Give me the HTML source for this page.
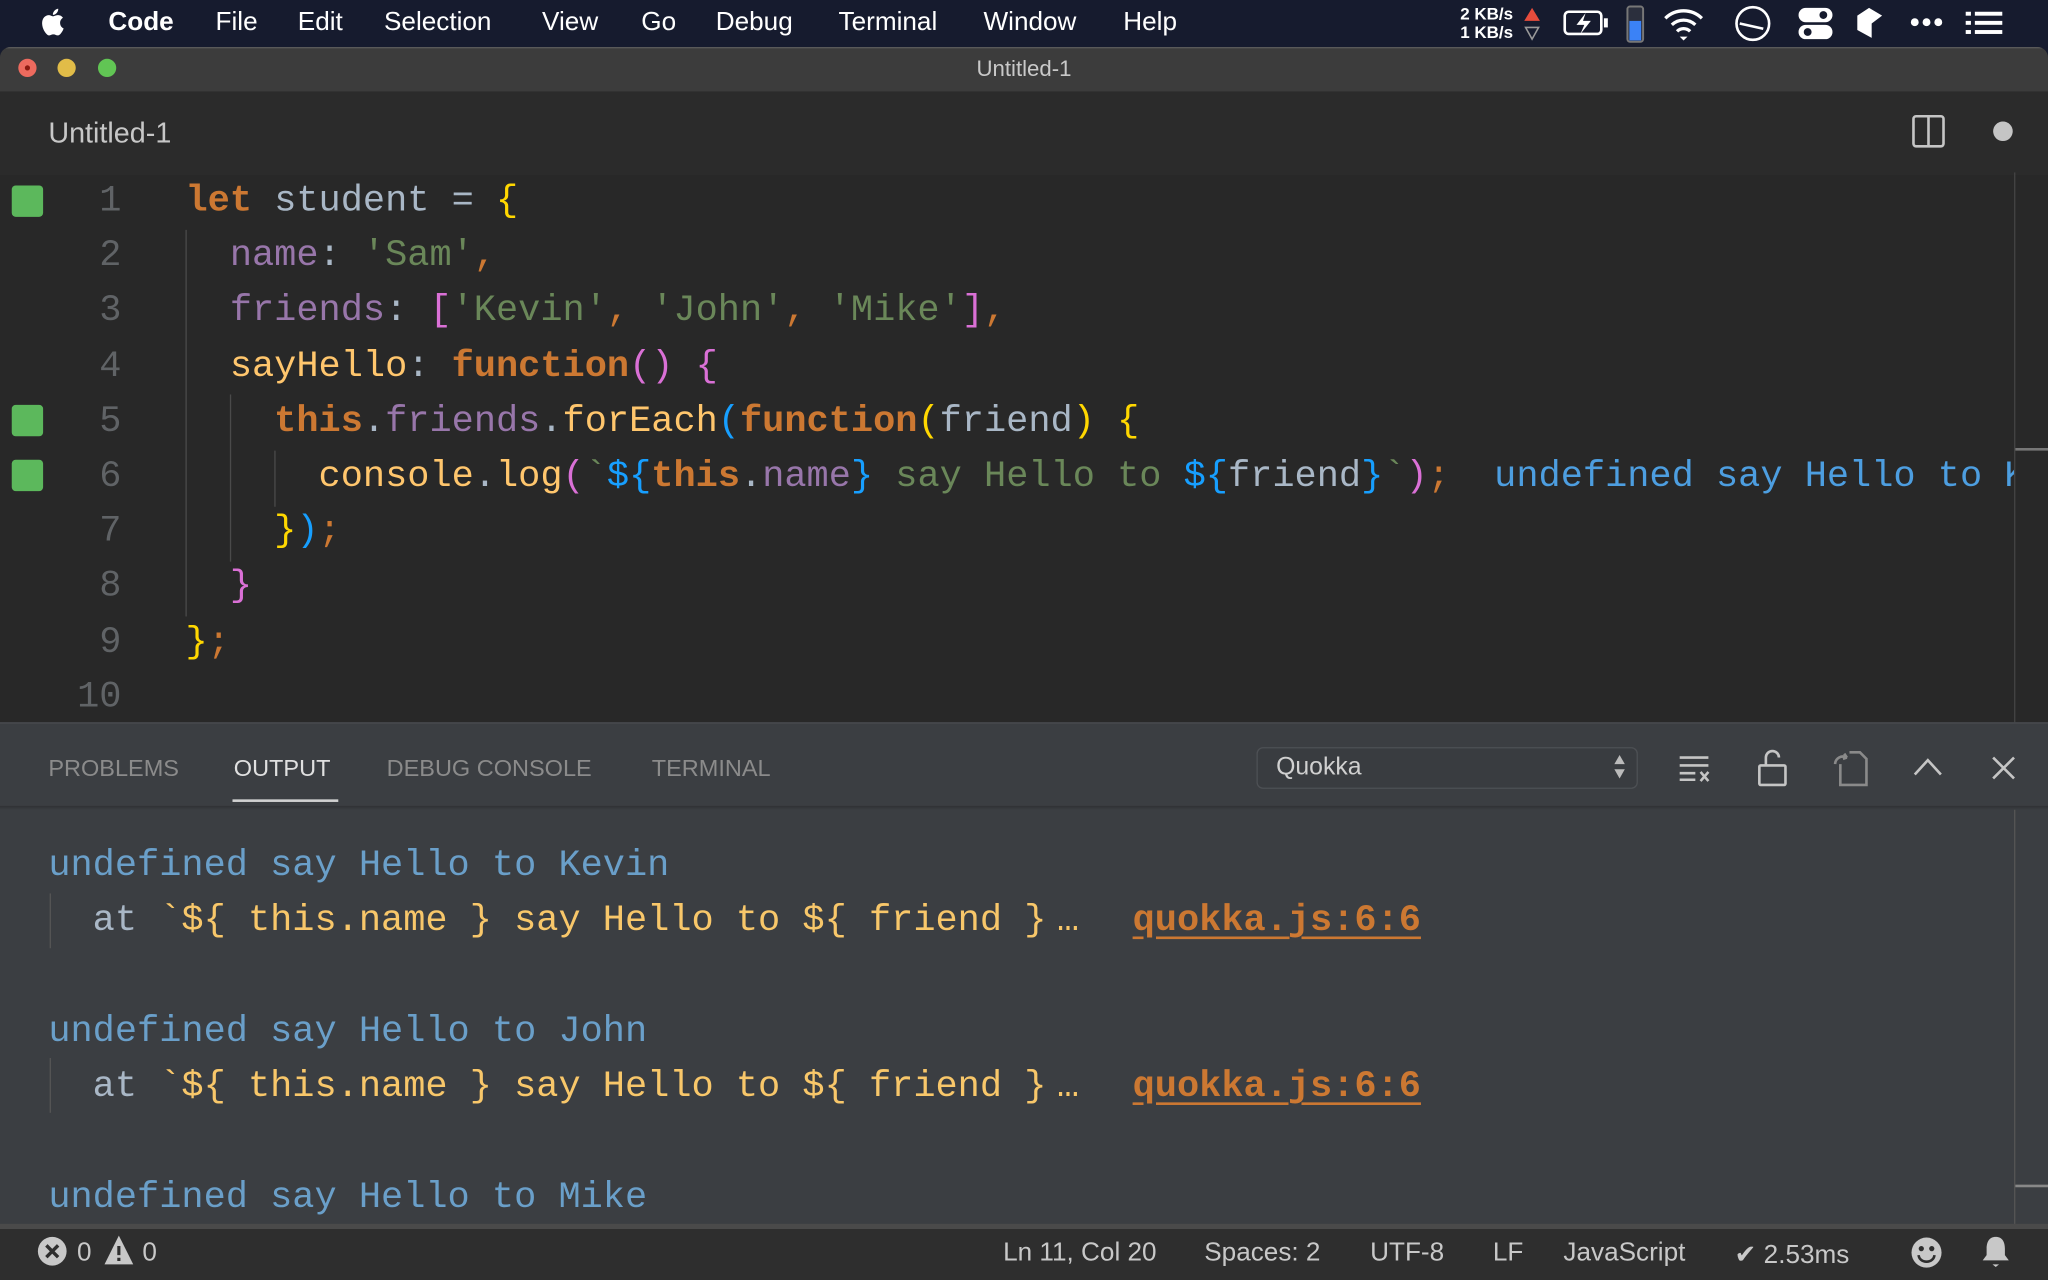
<!DOCTYPE html>
<html><head><meta charset="utf-8"><style>
html,body{margin:0;padding:0;width:2048px;height:1280px;overflow:hidden;background:#161b2e}
#w{position:absolute;left:0;top:0;width:1568px;height:980px;transform:scale(1.306122);transform-origin:0 0;font-family:"Liberation Sans",sans-serif;overflow:hidden}
.a{position:absolute}
.mono{font-family:"Liberation Mono","DejaVu Sans Mono",monospace;font-size:28.3px;white-space:pre;line-height:42.2px}
.menu span{position:absolute;top:6px;color:#fff;font-size:20px}
.k{color:#cc7832;font-weight:bold}.v{color:#a9b7c6}.p{color:#9876aa}.s{color:#6a8759}.f{color:#ffc66d}
.y{color:#ffd700}.m{color:#da70d6}.b{color:#179fff}.o{color:#cc7832}
.ln{position:absolute;left:40px;width:53px;text-align:right;color:#606366}
.tab{position:absolute;top:578px;font-size:18px;color:#8b8b8b}
.st{position:absolute;top:948px;font-size:20px;color:#c8c8c8}
.el{display:inline-block;width:66px;padding-left:8px;box-sizing:border-box}
</style></head><body><div id="w">
<div class="a" style="left:0;top:0;width:1568px;height:36px;background:#161b2e"></div>
<div class="menu">
<svg class="a" style="left:31px;top:5px" width="22" height="24" viewBox="0 0 22 24"><path d="M15 12.5c0-2.6 2.1-3.8 2.2-3.9-1.2-1.8-3.1-2-3.7-2-1.6-.2-3.1.9-3.9.9-.8 0-2-.9-3.3-.9C4.600 6.700 3 7.700 2.100 9.200c-1.800 3.100-.5 7.800 1.300 10.300.9 1.200 1.900 2.600 3.200 2.600 1.300-.1 1.800-.8 3.300-.8s2 .8 3.300.8c1.400 0 2.300-1.300 3.100-2.500 1-1.400 1.400-2.800 1.400-2.900-.1 0-2.700-1-2.700-4.200zM12.500 4.900c.7-.9 1.200-2 1.100-3.200-1 0-2.300.7-3 1.600-.7.800-1.300 2-1.100 3.100 1.100.1 2.300-.6 3-1.500z" fill="#fff"/></svg>
<span style="left:83px;font-weight:bold">Code</span>
<span style="left:165px">File</span><span style="left:228px">Edit</span><span style="left:294px">Selection</span>
<span style="left:415px">View</span><span style="left:491px">Go</span><span style="left:548px">Debug</span>
<span style="left:642px">Terminal</span><span style="left:753px">Window</span><span style="left:860px">Help</span>
</div>
<div class="a" style="left:1118px;top:4px;color:#fff;font-size:13px;line-height:14px;font-weight:bold">2 KB/s<br>1 KB/s</div>
<svg class="a" style="left:1166px;top:4px" width="14" height="28"><path d="M1 12 7 2 13 12Z" fill="#e74c3c"/><path d="M2 17h10L7 26Z" fill="none" stroke="#999" stroke-width="1.2"/></svg>
<svg class="a" style="left:1196px;top:6px" width="38" height="24"><rect x="2" y="3" width="28" height="17" rx="3" fill="none" stroke="#fff" stroke-width="2"/><rect x="32" y="8" width="3" height="7" fill="#fff"/><path d="M18 4 11 13h6l-3 7 8-10h-6z" fill="#fff"/></svg>
<svg class="a" style="left:1244px;top:4px" width="16" height="30"><rect x="2" y="1" width="12" height="27" rx="2" fill="#2b2f3d" stroke="#777" stroke-width="1.5"/><rect x="3.5" y="12" width="9" height="15" fill="#3b82f6"/></svg>
<svg class="a" style="left:1272px;top:5px" width="34" height="26"><path d="M3 9a20 20 0 0 1 28 0M8 14a13 13 0 0 1 18 0M12 19a7 7 0 0 1 10 0" fill="none" stroke="#fff" stroke-width="2.5"/><path d="M14 23h6l-3 3z" fill="#fff"/></svg>
<svg class="a" style="left:1327px;top:3px" width="30" height="30"><circle cx="15" cy="15" r="12.5" fill="none" stroke="#fff" stroke-width="2"/><path d="M5 15l18 4" stroke="#fff" stroke-width="2"/></svg>
<svg class="a" style="left:1376px;top:5px" width="28" height="26"><rect x="1" y="1" width="26" height="11" rx="5.5" fill="#fff"/><circle cx="20" cy="6.5" r="3" fill="#161b2e"/><rect x="1" y="14" width="26" height="11" rx="5.5" fill="#fff"/><circle cx="8" cy="19.5" r="3" fill="#161b2e"/></svg>
<svg class="a" style="left:1420px;top:4px" width="24" height="28"><path d="M2 8 11 2l10 6-8 6v11l-11-6z" fill="#fff"/></svg>
<svg class="a" style="left:1462px;top:12px" width="28" height="10"><circle cx="4" cy="5" r="3" fill="#fff"/><circle cx="13" cy="5" r="3" fill="#fff"/><circle cx="22" cy="5" r="3" fill="#fff"/></svg>
<svg class="a" style="left:1503px;top:7px" width="32" height="22"><g fill="#fff"><rect x="2" y="2" width="4" height="3"/><rect x="9" y="2" width="21" height="3"/><rect x="2" y="9" width="4" height="3"/><rect x="9" y="9" width="21" height="3"/><rect x="2" y="16" width="4" height="3"/><rect x="9" y="16" width="21" height="3"/></g></svg>

<div class="a" style="left:0;top:36px;width:1568px;height:944px;background:#282828;border-radius:8px 8px 0 0;overflow:hidden">
 <div class="a" style="left:0;top:0;width:1568px;height:34px;background:#3c3c3c;border-top:1px solid #5a5a5a"></div>
</div>
<div class="a" style="left:14px;top:45px;width:14px;height:14px;border-radius:50%;background:#ed6a5e"></div>
<div class="a" style="left:19px;top:50px;width:4px;height:4px;border-radius:50%;background:#8c1a10"></div>
<div class="a" style="left:44px;top:45px;width:14px;height:14px;border-radius:50%;background:#e1bc48"></div>
<div class="a" style="left:75px;top:45px;width:14px;height:14px;border-radius:50%;background:#61c554"></div>
<div class="a" style="left:0;top:43px;width:1568px;text-align:center;color:#c9c9c9;font-size:17px">Untitled-1</div>
<div class="a" style="left:0;top:70px;width:1568px;height:64px;background:#2b2b2b"></div>
<div class="a" style="left:37px;top:89px;color:#c7c7c7;font-size:22px">Untitled-1</div>
<svg class="a" style="left:1463px;top:87px" width="28" height="28"><rect x="2" y="2" width="23" height="23" rx="2" fill="none" stroke="#c5c5c5" stroke-width="2"/><path d="M13.5 2v23" stroke="#c5c5c5" stroke-width="2"/></svg>
<div class="a" style="left:1526px;top:93px;width:15px;height:15px;border-radius:50%;background:#c5c5c5"></div>
<div class="a" style="left:1542px;top:132px;width:1px;height:421px;background:#444"></div>
<div class="a" style="left:1543px;top:343px;width:25px;height:2px;background:#777"></div>

<div class="a" style="left:9px;top:142px;width:24px;height:24px;border-radius:3px;background:#5cb85c"></div>
<div class="a" style="left:9px;top:310px;width:24px;height:24px;border-radius:3px;background:#5cb85c"></div>
<div class="a" style="left:9px;top:352px;width:24px;height:24px;border-radius:3px;background:#5cb85c"></div>
<div class="a" style="left:142px;top:176px;width:1px;height:296px;background:#4a4a4a"></div>
<div class="a" style="left:176px;top:302px;width:1px;height:128px;background:#4a4a4a"></div>
<div class="a" style="left:210px;top:345px;width:1px;height:43px;background:#4a4a4a"></div>

<div class="mono a" style="left:0;top:133px;width:1542px;height:420px;overflow:hidden">
<div class="ln" style="top:0">1</div><div class="ln" style="top:42.2px">2</div><div class="ln" style="top:84.4px">3</div><div class="ln" style="top:126.6px">4</div><div class="ln" style="top:168.8px">5</div><div class="ln" style="top:211px">6</div><div class="ln" style="top:253.2px">7</div><div class="ln" style="top:295.4px">8</div><div class="ln" style="top:337.6px">9</div><div class="ln" style="top:379.8px">10</div>
<div class="a" style="left:142px;top:0"><span class="k">let</span><span class="v"> student = </span><span class="y">{</span>
<span class="p">  name</span><span class="v">: </span><span class="s">'Sam'</span><span class="o">,</span>
<span class="p">  friends</span><span class="v">: </span><span class="m">[</span><span class="s">'Kevin'</span><span class="o">, </span><span class="s">'John'</span><span class="o">, </span><span class="s">'Mike'</span><span class="m">]</span><span class="o">,</span>
<span class="f">  sayHello</span><span class="v">: </span><span class="k">function</span><span class="m">()</span> <span class="m">{</span>
<span class="k">    this</span><span class="v">.</span><span class="p">friends</span><span class="v">.</span><span class="f">forEach</span><span class="b">(</span><span class="k">function</span><span class="y">(</span><span class="v">friend</span><span class="y">)</span> <span class="y">{</span>
<span class="f">      console</span><span class="v">.</span><span class="f">log</span><span class="m">(</span><span class="s">`</span><span class="b">${</span><span class="k">this</span><span class="v">.</span><span class="p">name</span><span class="b">}</span><span class="s"> say Hello to </span><span class="b">${</span><span class="v">friend</span><span class="b">}</span><span class="s">`</span><span class="m">)</span><span class="o">;</span>  <span style="color:#4d9ee0">undefined say Hello to Kevin</span>
<span class="y">    }</span><span class="b">)</span><span class="o">;</span>
<span class="m">  }</span>
<span class="y">}</span><span class="o">;</span></div>
</div>

<div class="a" style="left:0;top:553px;width:1568px;height:387px;background:#3b3e42;border-top:1px solid #4a4d51"></div>
<div class="a" style="left:0;top:617px;width:1568px;height:3px;background:linear-gradient(#2f3134,#3b3e42)"></div>
<div class="tab" style="left:37px">PROBLEMS</div>
<div class="tab" style="left:179px;color:#e0e0e0">OUTPUT</div>
<div class="a" style="left:178px;top:612px;width:81px;height:2px;background:#d0d0d0"></div>
<div class="tab" style="left:296px">DEBUG CONSOLE</div>
<div class="tab" style="left:499px">TERMINAL</div>
<div class="a" style="left:962px;top:572px;width:290px;height:30px;border:1px solid #4d5054;border-radius:5px;background:#393c40"></div>
<div class="a" style="left:977px;top:577px;color:#d0d0d0;font-size:19px">Quokka</div>
<svg class="a" style="left:1234px;top:575px" width="12" height="24"><path d="M2 10 6 3 10 10Z M2 14h8L6 21Z" fill="#bbb"/></svg>
<svg class="a" style="left:1284px;top:576px" width="32" height="24"><g stroke="#c5c5c5" stroke-width="2"><path d="M2 4h22M2 10h22M2 16h12M2 21h12"/><path d="M18 15l6 7M24 15l-6 7"/></g></svg>
<svg class="a" style="left:1345px;top:573px" width="26" height="30"><rect x="2" y="13" width="20" height="15" rx="1" fill="none" stroke="#c5c5c5" stroke-width="2"/><path d="M7 13V7a5 5 0 0 1 10 0" fill="none" stroke="#c5c5c5" stroke-width="2"/></svg>
<svg class="a" style="left:1401px;top:573px" width="30" height="30"><path d="M8 12v16h20V8l-5-5h-8" fill="none" stroke="#8a8a8a" stroke-width="2"/><path d="M4 12a6 6 0 0 1 9-5l-2-3M13 7l-3 1" fill="none" stroke="#8a8a8a" stroke-width="2"/></svg>
<svg class="a" style="left:1463px;top:578px" width="26" height="18"><path d="M3 15 13 4l10 11" fill="none" stroke="#c5c5c5" stroke-width="2"/></svg>
<svg class="a" style="left:1523px;top:577px" width="22" height="22"><path d="M3 3l16 16M19 3 3 19" stroke="#c5c5c5" stroke-width="2"/></svg>
<div class="a" style="left:1542px;top:620px;width:1px;height:320px;background:#555"></div>
<div class="a" style="left:1543px;top:907px;width:25px;height:2px;background:#888"></div>
<div class="a" style="left:38px;top:684px;width:1px;height:42px;background:#555"></div>
<div class="a" style="left:38px;top:810px;width:1px;height:42px;background:#555"></div>

<div class="mono a" style="left:37px;top:642px;line-height:42.3px"><span style="color:#6a9fc9">undefined say Hello to Kevin</span>
<span style="color:#a9b7c6">  at </span><span style="color:#f8c76a">`${ this.name } say Hello to ${ friend }<span class="el">…</span></span><span style="color:#cc7832;font-weight:bold;text-decoration:underline;text-underline-offset:5px">quokka.js:6:6</span>

<span style="color:#6a9fc9">undefined say Hello to John</span>
<span style="color:#a9b7c6">  at </span><span style="color:#f8c76a">`${ this.name } say Hello to ${ friend }<span class="el">…</span></span><span style="color:#cc7832;font-weight:bold;text-decoration:underline;text-underline-offset:5px">quokka.js:6:6</span>

<span style="color:#6a9fc9">undefined say Hello to Mike</span></div>

<div class="a" style="left:0;top:937px;width:1568px;height:4px;background:#4a4a4a"></div>
<div class="a" style="left:0;top:941px;width:1568px;height:39px;background:#2e2e2e"></div>
<svg class="a" style="left:28px;top:946px" width="24" height="24"><circle cx="12" cy="12" r="11" fill="#c8c8c8"/><path d="M7.500 7.500l9 9M16.500 7.500l-9 9" stroke="#2e2e2e" stroke-width="2.6"/></svg>
<div class="st" style="left:59px">0</div>
<svg class="a" style="left:79px;top:945px" width="24" height="24"><path d="M12 1 23 23H1Z" fill="#c8c8c8"/><path d="M12 9v7M12 18v2.500" stroke="#2e2e2e" stroke-width="2.400"/></svg>
<div class="st" style="left:109px">0</div>
<div class="st" style="left:768px">Ln 11, Col 20</div>
<div class="st" style="left:922px">Spaces: 2</div>
<div class="st" style="left:1049px">UTF-8</div>
<div class="st" style="left:1143px">LF</div>
<div class="st" style="left:1197px">JavaScript</div>
<div class="st" style="left:1328px">✔ 2.53ms</div>
<svg class="a" style="left:1462px;top:946px" width="26" height="26"><circle cx="13" cy="13" r="11.500" fill="#c8c8c8"/><circle cx="9" cy="10" r="2" fill="#2e2e2e"/><circle cx="17" cy="10" r="2" fill="#2e2e2e"/><path d="M7 15a6 5 0 0 0 12 0" fill="none" stroke="#2e2e2e" stroke-width="2"/></svg>
<svg class="a" style="left:1516px;top:945px" width="24" height="28"><path d="M12 2c-5 0-7 4-7 9v5l-3 4h20l-3-4v-5c0-5-2-9-7-9z" fill="#c8c8c8"/><path d="M9.500 23h5l-2.500 2z" fill="#c8c8c8"/></svg>
</div></body></html>
